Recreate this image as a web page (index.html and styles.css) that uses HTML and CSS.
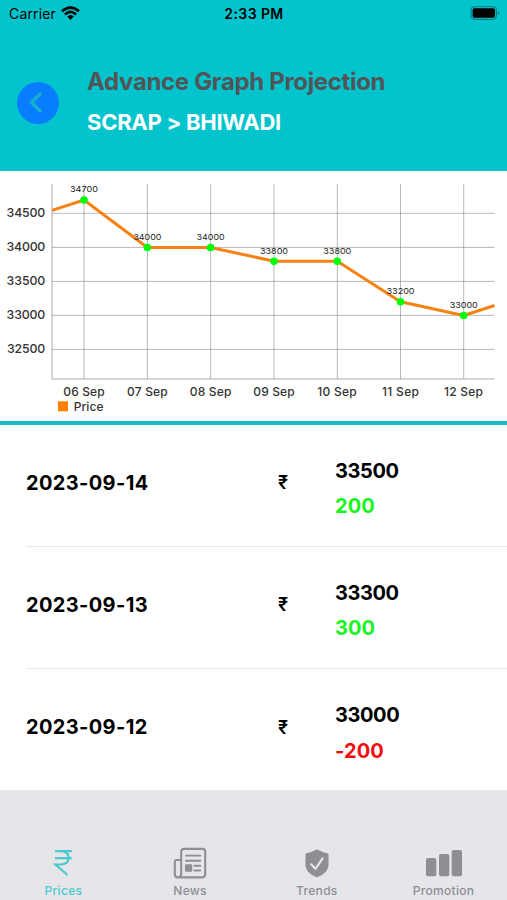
FILE: index.html
```html
<!DOCTYPE html>
<html lang="en">
<head>
<meta charset="utf-8">
<title>Advance Graph Projection</title>
<link rel="stylesheet" href="styles.css">
</head>
<body>
<div class="app">
  <header class="header">
    <div class="status">
      <div class="carrier"><span>Carrier</span>
        <svg class="wifi" width="19" height="15" viewBox="0 0 19 15" fill="none" stroke="#000" stroke-width="2.6"><path d="M1 5.2Q9.5-2 18 5.2M3.9 8.4Q9.5 3.5 15.1 8.4"/><path d="M6.2 10.6Q9.5 7.6 12.8 10.6L9.5 14Z" fill="#000" stroke="none"/></svg>
      </div>
      <span class="time">2:33 PM</span>
      <svg class="battery" width="30" height="15" viewBox="0 0 30 15"><rect x="1.2" y=".7" width="25.1" height="12.6" rx="3.5" fill="none" stroke="#087f83" stroke-width="1.2"/><rect x="2.6" y="2.3" width="22.4" height="9.4" rx="2" fill="#000"/><path d="M27.6 5q3 2 0 4z" fill="#087f83"/></svg>
    </div>
    <div class="heading">
      <div class="back"><svg width="42" height="42" viewBox="0 0 42 42" fill="none" stroke="#16aed0" stroke-width="3.6" stroke-linecap="round" stroke-linejoin="round"><path d="M23 12 14.5 20.5 23 29"/></svg></div>
      <div class="titles">
        <h1 class="title">Advance Graph Projection</h1>
        <h2 class="subtitle">SCRAP &gt; BHIWADI</h2>
      </div>
    </div>
  </header>

  <section class="chart">
    <svg width="507" height="249" viewBox="0 171 507 249">
      <path class="grid" d="M52 213.3H494.5M52 247.4H494.5M52 281.4H494.5M52 315.4H494.5M52 349.4H494.5M84 184V379M147.4 184V379M210.6 184V379M274 184V379M337.3 184V379M400.5 184V379M463.7 184V379"/>
      <path class="axis" d="M52 184V379H494.5"/>
      <path class="line" d="M52 210.4 84 200 147.4 247.5H210.6L274 261.2H337.3L400.5 301.8 463.7 315.5 494.5 305.5"/>
      <g class="dots"><circle cx="84" cy="200" r="3.8"/><circle cx="147.4" cy="247.5" r="3.8"/><circle cx="210.6" cy="247.5" r="3.8"/><circle cx="274" cy="261.2" r="3.8"/><circle cx="337.3" cy="261.2" r="3.8"/><circle cx="400.5" cy="301.8" r="3.8"/><circle cx="463.7" cy="315.5" r="3.8"/></g>
      <g class="values"><text x="84" y="191.7" textLength="28" lengthAdjust="spacingAndGlyphs">34700</text><text x="147.4" y="239.5" textLength="28" lengthAdjust="spacingAndGlyphs">34000</text><text x="210.6" y="239.5" textLength="28" lengthAdjust="spacingAndGlyphs">34000</text><text x="274" y="253.5" textLength="28" lengthAdjust="spacingAndGlyphs">33800</text><text x="337.3" y="253.5" textLength="28" lengthAdjust="spacingAndGlyphs">33800</text><text x="400.5" y="294" textLength="28" lengthAdjust="spacingAndGlyphs">33200</text><text x="463.7" y="307.6" textLength="28" lengthAdjust="spacingAndGlyphs">33000</text></g>
      <g class="ylabels"><text x="45.3" y="217" textLength="38.7">34500</text><text x="45.3" y="251" textLength="38.7">34000</text><text x="45.3" y="285" textLength="38.7">33500</text><text x="45.3" y="319" textLength="38.7">33000</text><text x="45.3" y="353" textLength="38.3">32500</text></g>
      <g class="xlabels"><text x="84" y="396.3" textLength="41.5">06 Sep</text><text x="147.4" y="396.3" textLength="40.7">07 Sep</text><text x="210.6" y="396.3" textLength="41.5">08 Sep</text><text x="274" y="396.3" textLength="41.5">09 Sep</text><text x="337" y="396.3" textLength="39.5">10 Sep</text><text x="400.5" y="396.3" textLength="37">11 Sep</text><text x="463.5" y="396.3" textLength="39">12 Sep</text></g>
      <rect x="58" y="401.3" width="10" height="10" fill="#ff8000"/>
      <text class="legend" x="73.7" y="411" textLength="29.8">Price</text>
    </svg>
  </section>

  <main class="list">
    <div class="row"><span class="date">2023-09-14</span><span class="currency">₹</span><div class="amount"><span>33500</span><span class="up">200</span></div></div>
    <div class="row"><span class="date">2023-09-13</span><span class="currency">₹</span><div class="amount"><span>33300</span><span class="up">300</span></div></div>
    <div class="row"><span class="date">2023-09-12</span><span class="currency">₹</span><div class="amount"><span>33000</span><span class="down">-200</span></div></div>
  </main>

  <nav class="tabs">
    <div class="tab active">
      <svg width="40" height="34" viewBox="0 0 40 34" fill="none" stroke="currentColor" stroke-width="2.2"><path d="M12 5.1H28.7M12 12.2H28.7M12 5.1H17C22.8 5.1 25.7 7.7 25.7 11.8C25.7 16 22.8 18.5 17 18.5H12.5L24.5 29"/></svg>
      <span>Prices</span>
    </div>
    <div class="tab">
      <svg width="40" height="34" viewBox="0 0 40 34" fill="none" stroke="currentColor" stroke-width="2.1" stroke-linecap="round" stroke-linejoin="round"><path d="M10.7 14H6.7Q4.8 14 4.8 16V28Q4.8 31.4 7.8 31.4H32Q35.2 31.4 35.2 28V5.7Q35.2 2.9 32.4 2.9H14Q11.2 2.9 11.2 5.7V28Q11.2 31.4 7.8 31.4"/><path d="M16 9.6H30.3M16 14.8H30.3M24.3 19.7H30.3M24.3 24.5H30.3" stroke-width="1.9"/><rect x="16" y="19.4" width="5.2" height="5.2" fill="currentColor"/></svg>
      <span>News</span>
    </div>
    <div class="tab">
      <svg width="40" height="34" viewBox="0 0 40 34"><path fill="currentColor" d="M19 3.7Q20 3.2 21 3.7 25 6.2 30.3 7.2 31.5 7.4 31.5 8.8V18.5C31.5 25 26.5 28.5 20.8 31.1Q20 31.5 19.2 31.1C13.5 28.5 8.5 25 8.5 18.5V8.8Q8.5 7.4 9.7 7.2 15 6.2 19 3.7Z"/><path d="m14.2 18.3 4.2 4.5 7.2-10.5" fill="none" stroke="#e5e5ea" stroke-width="2.2" stroke-linecap="round" stroke-linejoin="round"/></svg>
      <span>Trends</span>
    </div>
    <div class="tab">
      <svg width="40" height="34" viewBox="0 0 40 34" fill="currentColor"><rect x="2" y="12" width="10.3" height="18.2" rx="2"/><rect x="15" y="8" width="10.3" height="22.2" rx="2"/><rect x="27.7" y="4" width="10.3" height="26.2" rx="2"/></svg>
      <span>Promotion</span>
    </div>
  </nav>
</div>
</body>
</html>
```
FILE: styles.css
```css
* { box-sizing: border-box; }
body { margin: 0; background: #fff; font-family: Inter, "Liberation Sans", sans-serif; }
.app { width: 507px; height: 900px; display: flex; flex-direction: column; overflow: hidden; }
.header { height: 171px; flex: none; background: #03c4cc; }
.status { height: 28px; padding: 0 7px 0 9px; display: grid; grid-template-columns: 1fr auto 1fr; align-items: center; font-size: 14px; line-height: 28px; }
.carrier { display: flex; align-items: center; gap: 5px; letter-spacing: .15px; }
.wifi { margin-top: -2px; }
.time { font-weight: 600; letter-spacing: .4px; margin-right: 1px; }
.battery { justify-self: end; margin-top: -1px; }
.heading { display: flex; padding: 34px 0 0 17px; }
.back { width: 42px; height: 42px; margin-top: 20px; border-radius: 50%; background: #087dff; }
.titles { margin-left: 28px; }
.title, .subtitle { margin: 0; line-height: 40px; white-space: nowrap; font-weight: 700; }
.title { font-size: 24px; letter-spacing: -.34px; color: #525557; }
.subtitle { font-size: 22px; letter-spacing: -.27px; color: #fff; }
.chart { height: 253.5px; flex: none; border-bottom: 4px solid #13bdc6; }
.chart svg { display: block; }
.grid { stroke: #808080; stroke-opacity: .55; stroke-width: 1; }
.axis { stroke: #aaa; stroke-width: 1; fill: none; }
.line { stroke: #f58212; stroke-width: 3; fill: none; stroke-linejoin: round; }
.dots { fill: #0f0; }
.values { font-size: 8px; text-anchor: middle; fill: #222; }
.ylabels { font-size: 12.3px; text-anchor: end; }
.xlabels { font-size: 12px; text-anchor: middle; }
.legend { font-size: 12px; }
.ylabels, .xlabels, .legend { font-weight: 500; fill: #333; }
.list { height: 365.5px; flex: none; }
.row { height: 122px; margin-left: 26px; display: grid; grid-template-columns: 252px 57px 1fr; align-items: center; border-bottom: 1px solid #e9e9eb; font-size: 20px; font-weight: 700; padding-bottom: 5px; }
.row:last-child { border: 0; }
.amount { display: flex; flex-direction: column; line-height: 35.3px; margin-top: 13px; letter-spacing: -.4px; }
.date { letter-spacing: .36px; }
.currency { font-size: 18px; font-weight: 600; }
.up { color: #16f51c; }
.down { color: #f20d0d; }
.up, .down { letter-spacing: .1px; }
.tabs { height: 110px; flex: none; background: #e5e5ea; display: grid; grid-template-columns: repeat(4, 1fr); padding-top: 56px; }
.tab { display: flex; flex-direction: column; align-items: center; color: #8e8e93; font-size: 12px; font-weight: 500; }
.tab svg { flex: none; }
.tab span { line-height: 20px; margin-top: 1px; letter-spacing: .3px; }
.active { color: #4acacb; }
```
